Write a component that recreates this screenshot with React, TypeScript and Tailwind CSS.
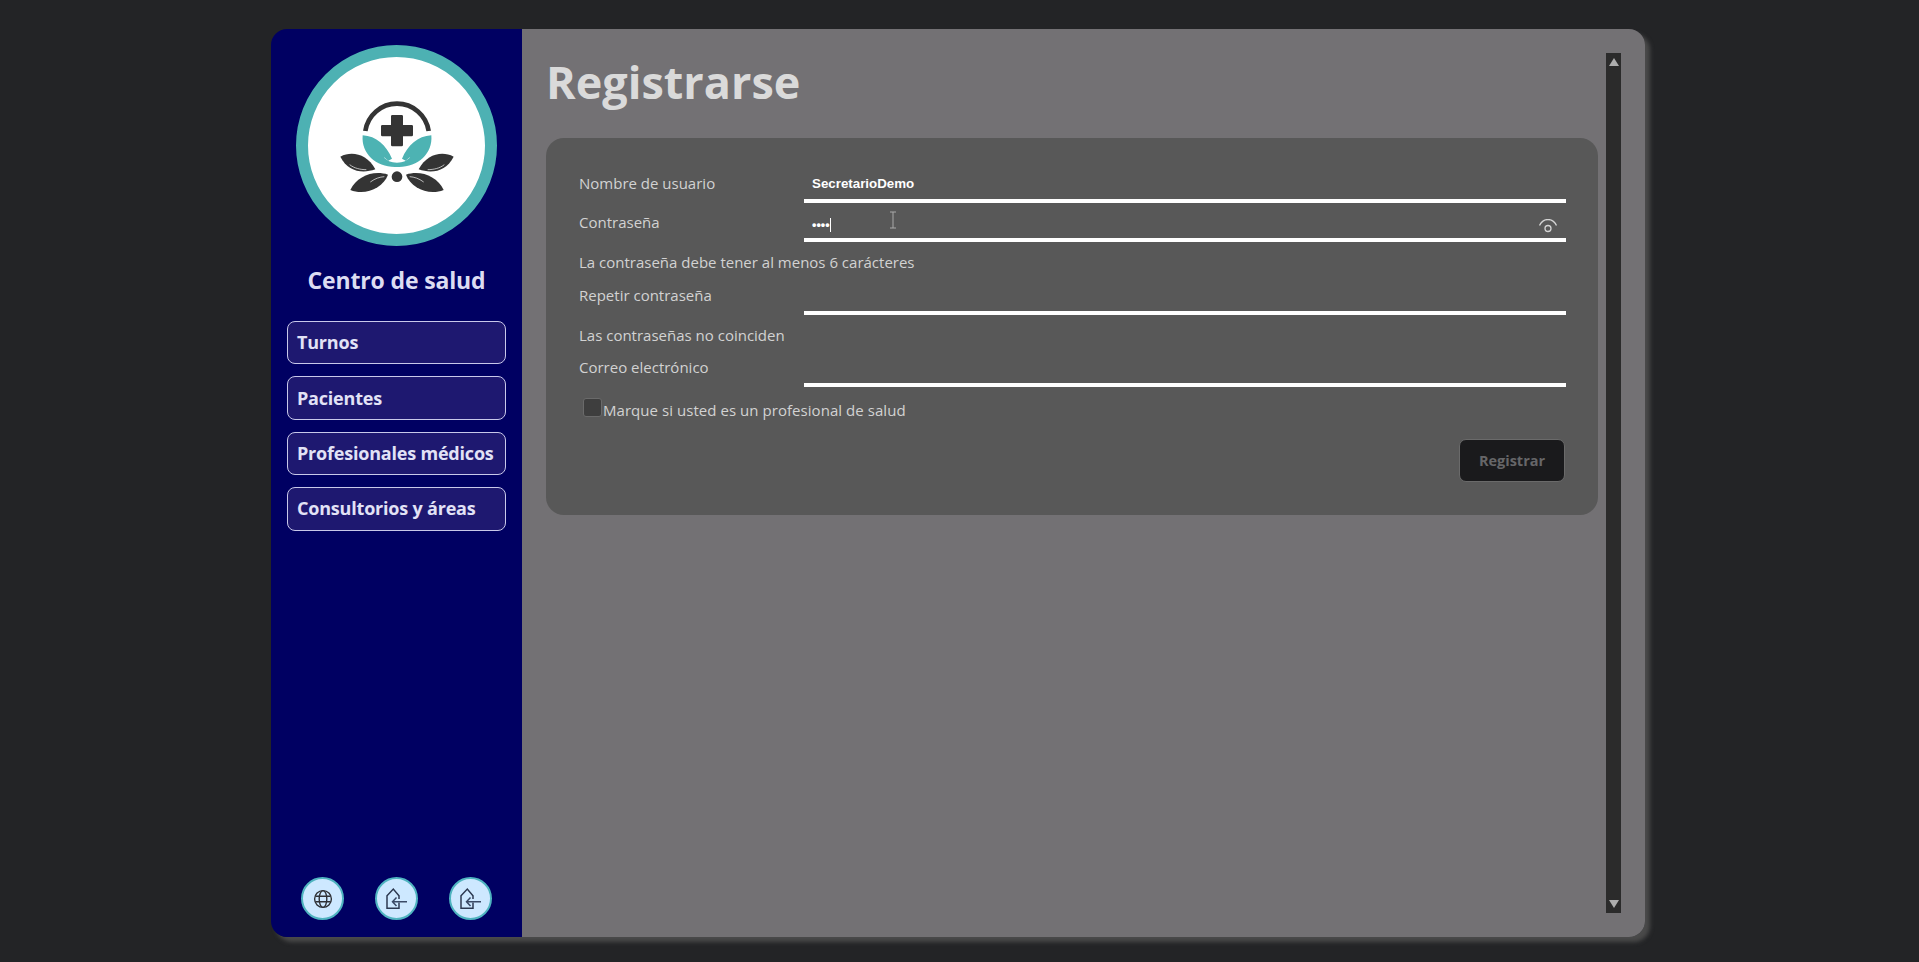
const FONT = "font-['Open_Sans','Noto_Sans',sans-serif]";

const NAV_ITEMS = ['Turnos', 'Pacientes', 'Profesionales médicos', 'Consultorios y áreas'];

function Logo() {
  const dark = '#343434';
  const teal = '#4db3b3';
  const half = (
    <>
      <path d="M127 148 C168 150 198 178 215 218 L204 224 L190 212 C198 224 212 229 230 230 L230 243 C170 246 122 205 127 148 Z" fill={teal} />
      <path d="M60 212 C95 194 140 204 165 250 C125 264 82 256 60 212 Z" fill={dark} />
      <path d="M88 236 C102 247 120 251 138 251" stroke="#fff" strokeWidth="2" fill="none" />
      <path d="M90 312 C110 270 160 252 203 266 C188 306 135 330 90 312 Z" fill={dark} />
      <path d="M150 288 C165 277 178 273 192 272" stroke="#fff" strokeWidth="2" fill="none" />
    </>
  );
  return (
    <svg viewBox="5 0 450 360" className="w-[150px] h-[120px]">
      <path d="M135 135 A96 96 0 0 1 325 135" stroke={dark} strokeWidth="14" fill="none" />
      <path d="M216 87 H244 Q248 87 248 91 V117 H274 Q278 117 278 121 V147 Q278 151 274 151 H248 V177 Q248 181 244 181 H216 Q212 181 212 177 V151 H186 Q182 151 182 147 V121 Q182 117 186 117 H212 V91 Q212 87 216 87 Z" fill={dark} />
      {half}
      <g transform="translate(460 0) scale(-1 1)">{half}</g>
      <circle cx="230" cy="272" r="16" fill={dark} />
    </svg>
  );
}

function GlobeIcon() {
  return (
    <svg viewBox="0 0 20 20" className="w-5 h-5" fill="none" stroke="#2f3136" strokeWidth="1.4">
      <circle cx="10" cy="10" r="8.4" />
      <ellipse cx="10" cy="10" rx="3.8" ry="8.4" />
      <path d="M2.4 7.2 H17.6 M2.4 12.8 H17.6" />
    </svg>
  );
}

function LeaveIcon() {
  return (
    <svg viewBox="0 0 24 24" className="w-6 h-6" fill="none" stroke="#2c3850" strokeWidth="1.5">
      <path d="M14 15.5 V21.3 H2 V8.7 L8.3 2 L14 8.7 V12" />
      <path d="M22 14.7 H7.5 M11.5 10.5 L7.5 14.7 L11.5 19" stroke="#3a4a66" />
    </svg>
  );
}

function RoundButton({ children }: { children: React.ReactNode }) {
  return (
    <button type="button" className="w-[43px] h-[43px] rounded-full bg-[#cde8ff] border-2 border-[#4fb4c0] flex items-center justify-center">
      {children}
    </button>
  );
}

function Field({ label, height, children }: { label: string; height: string; children?: React.ReactNode }) {
  return (
    <div className={`flex items-end ${height}`}>
      <label className="w-[225px] shrink-0 mb-[10px] text-[15px] leading-5 text-[#d2d2d2]">{label}</label>
      <div className="relative flex-1 h-full border-b-4 border-white flex items-end">{children}</div>
    </div>
  );
}

export default function App() {
  return (
    <div className={`h-[962px] bg-[#232426] pt-[29px] pl-[271px] overflow-hidden ${FONT}`}>
      <div className="flex w-[1374px] h-[908px] rounded-[16px] overflow-hidden shadow-[5px_5px_4px_#4a4a4a]">
        <aside className="w-[251px] shrink-0 bg-[#000062] flex flex-col items-center pt-4 pb-[17px]">
          <div className="w-[201px] h-[201px] rounded-full bg-white border-[12px] border-[#4db1b3] flex items-center justify-center">
            <Logo />
          </div>
          <h2 className="mt-[18px] text-[23px] leading-[32px] font-bold tracking-[-0.15px] text-[#dcdcf2]">Centro de salud</h2>
          <nav className="mt-[25px] flex flex-col gap-[12px]">
            {NAV_ITEMS.map(item => (
              <button
                key={item}
                type="button"
                className="w-[219px] h-[43.4px] px-[9px] text-left text-[18px] font-bold tracking-[-0.2px] whitespace-nowrap text-[#e2e2f6] bg-[#1e1870] border border-[#c8c8ea] rounded-[8px]"
              >
                {item}
              </button>
            ))}
          </nav>
          <div className="mt-auto flex gap-[31px]">
            <RoundButton><GlobeIcon /></RoundButton>
            <RoundButton><LeaveIcon /></RoundButton>
            <RoundButton><LeaveIcon /></RoundButton>
          </div>
        </aside>

        <main className="flex-1 bg-[#737174] flex">
          <div className="flex-1 pl-[24px] pr-[8px]">
            <h1 className="h-[109px] pt-[17px] text-[45px] leading-[72px] font-bold text-[#dadada]">Registrarse</h1>
            <form className="h-[377px] rounded-[18px] bg-[#585858] pl-[33px] pr-[32px] pt-[21px]">
              <Field label="Nombre de usuario" height="h-[44px]">
                <span className="pl-2 pb-[7px] text-[13.33px] leading-4 font-bold text-white font-['Liberation_Sans',sans-serif]">SecretarioDemo</span>
              </Field>
              <Field label="Contraseña" height="h-[39px]">
                <span className="pl-2 pb-[5px] text-[12.5px] leading-4 font-bold text-white font-['Liberation_Sans',sans-serif]">••••</span>
                <span className="w-px h-[14px] mb-[6px] bg-white" />
                <svg viewBox="0 0 18 14" className="absolute right-[9px] bottom-[5px] w-[18px] h-[14px]" fill="none" stroke="#d4d4d4" strokeWidth="1.3">
                  <path d="M0.5 6.5 C4 -1.5 14 -1.5 17.5 6.5" />
                  <circle cx="9" cy="9.5" r="3" />
                </svg>
                <svg viewBox="0 0 8 18" className="absolute left-[85px] bottom-[9px] w-2 h-[18px]" fill="none" stroke="#a8a8a8" strokeWidth="1">
                  <path d="M1 1 H7 M4 1 V17 M1 17 H7" />
                </svg>
              </Field>
              <p className="mt-[10px] text-[15px] leading-5 text-[#d2d2d2]">La contraseña debe tener al menos 6 carácteres</p>
              <Field label="Repetir contraseña" height="h-[43px]" />
              <p className="mt-[10px] text-[15px] leading-5 text-[#d2d2d2]">Las contraseñas no coinciden</p>
              <Field label="Correo electrónico" height="h-[42px]" />
              <div className="mt-[11px] pl-1 flex items-start">
                <span className="w-[19px] h-[19px] rounded-[3px] bg-[#3e3e3e] border border-[#6a6a6a]" />
                <span className="ml-[1px] mt-[2px] text-[15px] leading-5 tracking-[0.05px] text-[#d2d2d2]">Marque si usted es un profesional de salud</span>
              </div>
              <div className="mt-[19px] pr-[1px] flex justify-end">
                <button type="button" className="w-[106px] h-[43px] rounded-[7px] bg-[#1a1a1c] border border-[#6a6a6a] text-[14.5px] font-bold text-[#666668]">Registrar</button>
              </div>
            </form>
          </div>
          <div className="mt-6 h-[860px] w-[15px] mr-6 bg-[#2b2b2b] flex flex-col justify-between items-center py-[5px]">
            <span className="w-0 h-0 border-x-[5px] border-x-transparent border-b-[8px] border-b-[#aeaeae]" />
            <span className="w-0 h-0 border-x-[5px] border-x-transparent border-t-[8px] border-t-[#aeaeae]" />
          </div>
        </main>
      </div>
    </div>
  );
}
